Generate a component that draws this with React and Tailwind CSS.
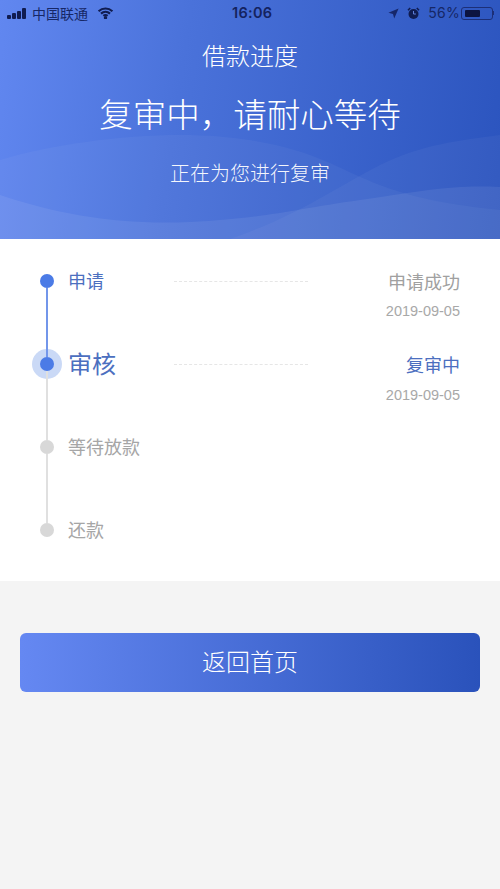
const font = { fontFamily: '"Noto Sans CJK SC", "Liberation Sans", sans-serif' }

const steps = [
  { name: '申请', status: '申请成功', date: '2019-09-05', state: 'done', line: 'bg-[#7396ea]' },
  { name: '审核', status: '复审中', date: '2019-09-05', state: 'active', line: 'bg-[#e0e0e0]' },
  { name: '等待放款', state: 'todo', line: 'bg-[#e0e0e0]' },
  { name: '还款', state: 'todo' },
]

function StatusBar() {
  return (
    <div className="relative flex h-[26px] items-center justify-between pl-[7px] pr-[6px] text-[#162766]">
      <div className="flex items-center">
        <div className="flex items-end gap-[1px]">
          <span className="h-[4px] w-[4px] rounded-[1px] bg-[#101c50]" />
          <span className="h-[6px] w-[4px] rounded-[1px] bg-[#101c50]" />
          <span className="h-[8px] w-[4px] rounded-[1px] bg-[#101c50]" />
          <span className="h-[11px] w-[4px] rounded-[1px] bg-[#101c50]" />
        </div>
        <span className="ml-[6px] text-[14px] leading-none">中国联通</span>
        <svg className="ml-[9px]" width="17" height="12" viewBox="0 0 17 13" fill="none" stroke="#101c50" strokeWidth="2.3">
          <path d="M1 4.6C5.4.6 11.6.6 16 4.6" />
          <path d="M3.6 7.2c2.9-2.5 6.9-2.5 9.8 0" />
          <path d="M6.2 9.6c1.4-1.1 3.2-1.1 4.6 0" />
          <circle cx="8.5" cy="11.6" r="0.7" fill="#101c50" />
        </svg>
      </div>
      <span className="absolute left-[232px] text-[14.5px] font-semibold leading-none tracking-[0.3px] text-[#14235f]" style={{ fontFamily: 'Inter, sans-serif' }}>16:06</span>
      <div className="flex items-center">
        <svg width="11" height="11" viewBox="0 0 11 11" fill="#16276a"><path d="M10.6.4 6.2 10.6 5 6 .4 4.8z" /></svg>
        <svg className="ml-[8px]" width="13" height="13" viewBox="0 0 13 13">
          <circle cx="6.5" cy="7" r="5" fill="#101c50" />
          <path d="M1 3.2 3.2 1M12 3.2 9.8 1" stroke="#101c50" strokeWidth="1.6" />
          <path d="M6.5 4v3h2.4" stroke="#5f7fd8" strokeWidth="1" fill="none" />
        </svg>
        <span className="ml-[8px] text-[14px] leading-none tracking-[0.3px]" style={{ fontFamily: 'Inter, sans-serif' }}>56%</span>
        <div className="ml-[1px] flex h-[13px] w-[32px] items-center rounded-[3px] border border-[#1c2f78] px-[3px] py-[2px]">
          <span className="h-full w-[15px] rounded-[1px] bg-[#0c1440]" />
        </div>
        <span className="h-[4px] w-[1px] bg-[#1c2f78]" />
      </div>
    </div>
  )
}

function Dot({ state }) {
  if (state === 'todo') {
    return <span className="h-[14px] w-[14px] shrink-0 rounded-full bg-[#d8d8d8]" />
  }
  return (
    <span className="relative h-[14px] w-[14px] shrink-0 rounded-full bg-[#4b7be6]">
      {state === 'active' && (
        <span className="absolute left-[-8px] top-[-8px] -z-10 h-[30px] w-[30px] rounded-full bg-[#cad9f6]" />
      )}
    </span>
  )
}

function Step({ step }) {
  const active = step.state === 'active'
  const todo = step.state === 'todo'
  const nameColor = todo ? 'text-[#a6a6a6]' : 'text-[#4c6fbf]'

  return (
    <div className={step.line ? 'flex h-[83px]' : 'flex h-[58px]'}>
      <div className="flex w-[14px] flex-col items-center">
        <Dot state={step.state} />
        {step.line && <span className={`w-[2px] flex-1 ${step.line}`} />}
      </div>
      <div className="ml-[14px] flex-1">
        <div className="flex h-[14px] items-center">
          <span className={`w-[106px] whitespace-nowrap leading-none ${nameColor} ${active ? 'text-[24px]' : 'text-[18px]'} ${todo ? 'mt-[-2px]' : 'mt-[-3px]'}`}>
            {step.name}
          </span>
          {step.status && (
            <>
              <span className="w-[134px] border-t border-dashed border-[#e6e6e6]" />
              <span className={`flex-1 text-right text-[18px] leading-none ${active ? 'text-[#4c6fbf]' : 'text-[#a0a0a0]'}`}>
                {step.status}
              </span>
            </>
          )}
        </div>
        {step.date && (
          <div className={`text-right text-[14.5px] leading-[18px] text-[#a8a8a8] ${active ? 'mt-[15px]' : 'mt-[14px]'}`} style={{ fontFamily: '"Liberation Sans", sans-serif' }}>
            {step.date}
          </div>
        )}
      </div>
    </div>
  )
}

export default function App() {
  return (
    <div className="flex min-h-[889px] flex-col bg-[#f4f4f4]" style={font}>
      <header className="relative h-[239px] overflow-hidden bg-[linear-gradient(98deg,#6187f0_0%,#4a72da_36%,#2b54be_100%)] text-white">
        <svg className="absolute left-0 top-[125px]" width="500" height="114" viewBox="0 0 500 114" fill="#fff">
          <path opacity="0.04" d="M0 35C50 20 120 10 180 10S290 20 330 38 400 75 500 85V114H0Z" />
          <path opacity="0.04" d="M230 114C300 90 340 60 380 40S460 15 500 10V114Z" />
          <path opacity="0.07" d="M0 70C60 90 120 100 190 97S290 85 360 75 450 60 500 62V114H0Z" />
        </svg>
        <div className="relative">
          <StatusBar />
          <h1 className="mt-[12px] text-center text-[24px] font-light leading-[34px]">借款进度</h1>
          <p className="mt-[18px] text-center text-[33.5px] font-light leading-[46px]">复审中，请耐心等待</p>
          <p className="mt-[23px] text-center text-[20px] font-light leading-[28px] text-white/95">正在为您进行复审</p>
        </div>
      </header>

      <section className="isolate bg-white pl-[40px] pr-[40px] pt-[35px]">
        {steps.map((step) => (
          <Step key={step.name} step={step} />
        ))}
      </section>

      <div className="px-[20px] pt-[52px]">
        <button className="h-[59px] w-full rounded-[6px] bg-gradient-to-r from-[#6588f2] to-[#2a52bb] pb-[3px] text-[24px] font-light text-white">
          返回首页
        </button>
      </div>
    </div>
  )
}
